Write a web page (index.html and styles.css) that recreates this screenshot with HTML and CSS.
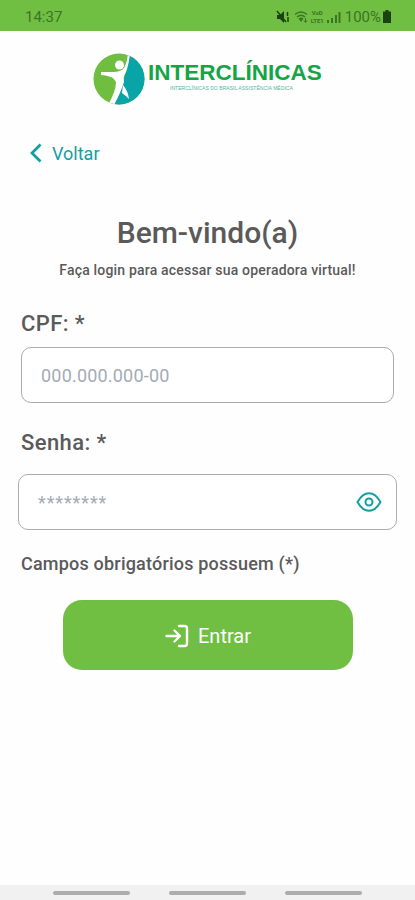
FILE: index.html
```html
<!DOCTYPE html>
<html lang="pt-BR">
<head>
    <meta charset="UTF-8">
    <meta name="viewport" content="width=device-width, initial-scale=1.0">
    <title>Interclínicas - Login</title>
    <link rel="stylesheet" href="styles.css">
</head>
<body>

    <!-- Barra de status -->
    <div class="status-bar">
        <span class="status-time">14:37</span>
        <div class="status-icons">
            <svg class="icon-mute" viewBox="0 0 14 14" width="14" height="14">
                <path d="M1 5h3l4-4v12L4 9H1z" fill="currentColor"/>
                <path d="M1 1l9 11M11.500 2v4M12 7v5" fill="none" stroke="currentColor" stroke-width="1.500"/>
            </svg>
            <svg class="icon-wifi" viewBox="0 0 15 14" width="15" height="14">
                <path d="M1 4.500q6-5 12 0M3 7q4-3.500 8 0" fill="none" stroke="currentColor" stroke-width="1.400"/>
                <path d="M4.500 8.500q2.500-2 5 0L7 12z" fill="currentColor"/>
                <path d="M11.500 8v4M10 10.500l1.500 2 1.500-2" fill="none" stroke="currentColor"/>
            </svg>
            <span class="volte"><span>VoD</span><span>LTE1</span></span>
            <svg class="icon-signal" viewBox="0 0 14 14" width="14" height="14">
                <path d="M0 10h2v3H0zM4 8h2v5H4zM8 5h2v8H8zM11.500 2h2v11h-2z" fill="currentColor"/>
            </svg>
            <span class="battery-text">100%</span>
            <svg class="icon-battery" viewBox="0 0 8 13" width="8" height="13">
                <path d="M2.500 0h3v1.500H8V13H0V1.500h2.500z" fill="currentColor"/>
            </svg>
        </div>
    </div>

    <!-- Logo -->
    <header class="logo">
        <svg class="logo-mark" viewBox="0 0 52 52" width="52" height="52">
            <defs>
                <clipPath id="circulo"><circle cx="26" cy="26" r="25.500"/></clipPath>
            </defs>
            <g clip-path="url(#circulo)">
                <rect width="52" height="52" fill="#6fbe3f"/>
                <path d="M36 0Q34 18 31 26Q24 40 17 52H52V0z" fill="#08a4a7"/>
                <path d="M37 0Q36 11 33 19Q30 23 31 29Q28 39 21 52H15Q23 38 23 29Q21 25 18 24Q12 22 8 22V19H20Q28 19 31 15Q34 10 35 0z" fill="#fff"/>
                <path d="M30 32Q35 38 36 46Q32 42 29 40z" fill="#fff"/>
            </g>
            <circle cx="26.500" cy="12" r="4.500" fill="#fff"/>
        </svg>
        <div class="logo-text">
            <span class="logo-name">INTERCLÍNICAS</span>
            <span class="logo-sub">INTERCLÍNICAS DO BRASIL ASSISTÊNCIA MÉDICA</span>
        </div>
    </header>

    <a href="#" class="voltar">
        <svg viewBox="0 0 12 20" width="12" height="20">
            <path d="M10.500 1.500L2 10l8.500 8.500" fill="none" stroke="currentColor" stroke-width="2.800"/>
        </svg>
        Voltar
    </a>

    <main class="container">
        <h1>Bem-vindo(a)</h1>
        <p class="subtitulo">Faça login para acessar sua operadora virtual!</p>

        <form>
            <label for="cpf">CPF: *</label>
            <input type="text" id="cpf" class="campo" placeholder="000.000.000-00">

            <label for="senha" class="label-senha">Senha: *</label>
            <div class="campo campo-senha">
                <input type="password" id="senha" placeholder="********">
                <svg class="icon-eye" viewBox="0 0 26 20" width="26" height="20">
                    <path d="M1.500 10Q6.500 1.200 13 1.200T24.500 10Q19.500 18.800 13 18.800T1.500 10z" fill="none" stroke="currentColor" stroke-width="2" stroke-linejoin="round"/>
                    <circle cx="13" cy="10" r="3.500" fill="none" stroke="currentColor" stroke-width="2"/>
                </svg>
            </div>

            <p class="aviso">Campos obrigatórios possuem (*)</p>

            <button type="button" class="entrar">
                <svg viewBox="0 0 24 24" width="24" height="24">
                    <path d="M1.500 12H15M9.500 6.500L15 12l-5.500 5.500M14 2h5.500Q22 2 22 4.500v15Q22 22 19.500 22H14" fill="none" stroke="currentColor" stroke-width="2.400" stroke-linecap="round" stroke-linejoin="round"/>
                </svg>
                Entrar
            </button>
        </form>
    </main>

    <!-- Barra de navegação do sistema -->
    <div class="nav-bar">
        <span></span>
        <span></span>
        <span></span>
    </div>

</body>
</html>
```
FILE: styles.css
```css
:root {
    --verde: #70bf43;
    --verde-logo: #14a544;
    --azul: #129fa3;
    --texto: #5a5a5a;
    --borda: #adadad;
}

* {
    box-sizing: border-box;
    margin: 0;
    padding: 0;
}

body {
    display: flex;
    flex-direction: column;
    height: 900px;
    font-family: Roboto, sans-serif;
    color: var(--texto);
    background-color: #fefefe;
    overflow: hidden;
}

.status-bar {
    display: flex;
    justify-content: space-between;
    align-items: center;
    height: 31px;
    padding: 2px 24px 0 25px;
    background-color: var(--verde);
    color: #3c7425;
}

.status-time {
    font-size: 15px;
}

.status-icons {
    display: flex;
    align-items: center;
}

.icon-mute,
.icon-battery {
    color: #1d4212;
}

.icon-wifi {
    margin-left: 4px;
}

.volte {
    display: flex;
    flex-direction: column;
    align-items: center;
    width: 17px;
    font-size: 6px;
    font-weight: 700;
    line-height: 8px;
}

.icon-signal {
    margin-left: 1px;
}

.battery-text {
    margin: 0 2px 0 4px;
    font-size: 15px;
}

.logo {
    display: flex;
    height: 53px;
    margin: 22px 0 0 93px;
}

.logo-text {
    display: flex;
    flex-direction: column;
    padding: 8px 0 0 3px;
    font-family: "Liberation Sans", Arial, sans-serif;
    color: var(--verde-logo);
}

.logo-name {
    font-size: 22.5px;
    font-weight: 700;
    line-height: 24px;
}

.logo-sub {
    padding-left: 22px;
    font-size: 5.1px;
    line-height: 6px;
    color: #55b5a0;
}

.voltar {
    display: flex;
    align-items: center;
    gap: 10px;
    height: 24px;
    margin: 35px 0 0 30px;
    font-size: 18px;
    color: var(--azul);
    text-decoration: none;
}

.container {
    flex: 1;
    padding: 50px 18px 0;
}

h1 {
    font-size: 30px;
    font-weight: 500;
    line-height: 36px;
    text-align: center;
}

.subtitulo {
    margin-top: 10px;
    font-size: 14px;
    font-weight: 500;
    letter-spacing: 0.19px;
    line-height: 18px;
    text-align: center;
}

label {
    display: block;
    margin: 32px 0 0 3px;
    font-size: 22px;
    font-weight: 500;
    letter-spacing: 0.4px;
    line-height: 26px;
}

.campo {
    display: block;
    width: 373px;
    height: 56px;
    margin: 10px 0 0 3px;
    padding: 0 19px;
    border: 1.5px solid var(--borda);
    border-radius: 10px;
    background-color: #fff;
    font-family: inherit;
    font-size: 18px;
    letter-spacing: 0.2px;
}

.label-senha {
    margin-top: 27px;
}

.campo-senha {
    display: flex;
    align-items: center;
    justify-content: space-between;
    width: 379px;
    margin: 18px 0 0;
    padding-right: 14px;
}

.campo-senha input {
    width: 200px;
    border: none;
    outline: none;
    font-family: inherit;
    font-size: 18px;
    letter-spacing: 0.9px;
}

input::placeholder {
    color: #a3abb5;
}

.icon-eye {
    color: var(--azul);
}

.aviso {
    margin: 23px 0 0 3px;
    font-size: 18px;
    font-weight: 500;
    letter-spacing: 0.2px;
    line-height: 22px;
}

.entrar {
    display: flex;
    align-items: center;
    justify-content: center;
    gap: 9px;
    width: 290px;
    height: 70px;
    margin: 25px 0 0 45px;
    padding-top: 2px;
    border: none;
    border-radius: 19px;
    background-color: var(--verde);
    color: #fff;
    font-family: inherit;
    font-size: 20px;
}

.nav-bar {
    display: flex;
    justify-content: center;
    gap: 39px;
    height: 15px;
    padding: 6px 0 0;
    background-color: #f1f1f1;
}

.nav-bar span {
    width: 77px;
    height: 4px;
    border-radius: 2px;
    background-color: #acacac;
}
```
